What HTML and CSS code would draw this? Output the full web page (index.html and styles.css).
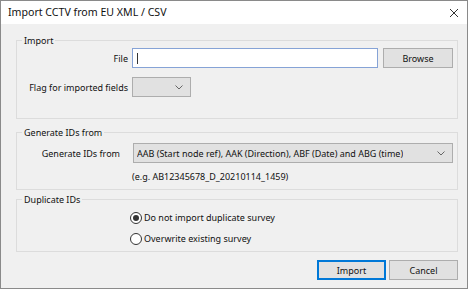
FILE: index.html
```html
<!DOCTYPE html>
<html lang="en">
<head>
    <meta charset="UTF-8">
    <meta name="viewport" content="width=device-width, initial-scale=1.0">
    <title>Import CCTV from EU XML / CSV</title>
    <link rel="stylesheet" href="styles.css">
</head>
<body>
    <div class="window">
        <div class="titlebar">
            <span class="title">Import CCTV from EU XML / CSV</span>
            <svg class="close" width="10" height="10" viewBox="0 0 10 10">
                <path d="M1 1 L9 9 M9 1 L1 9" stroke="#333" stroke-width="1" fill="none"/>
            </svg>
        </div>

        <div class="content">
            <fieldset class="group group-import">
                <legend>Import</legend>
                <div class="row">
                    <label class="label">File</label>
                    <div class="text-input"><span class="caret"></span></div>
                    <div class="btn btn-browse">Browse</div>
                </div>
                <div class="row row-flag">
                    <label class="label">Flag for imported fields</label>
                    <div class="combo combo-flag">
                        <span class="combo-text"></span>
                        <svg class="chevron" width="8" height="5" viewBox="0 0 8 5">
                            <path d="M0.5 0.5 L4 4 L7.5 0.5" stroke="#666" stroke-width="1" fill="none"/>
                        </svg>
                    </div>
                </div>
            </fieldset>

            <fieldset class="group group-ids">
                <legend>Generate IDs from</legend>
                <div class="row">
                    <label class="label">Generate IDs from</label>
                    <div class="combo combo-ids">
                        <span class="combo-text">AAB (Start node ref), AAK (Direction), ABF (Date) and ABG (time)</span>
                        <svg class="chevron" width="8" height="5" viewBox="0 0 8 5">
                            <path d="M0.5 0.5 L4 4 L7.5 0.5" stroke="#666" stroke-width="1" fill="none"/>
                        </svg>
                    </div>
                </div>
                <div class="example">(e.g. AB12345678_D_20210114_1459)</div>
            </fieldset>

            <fieldset class="group group-dup">
                <legend>Duplicate IDs</legend>
                <div class="radio-list">
                    <div class="radio checked"><span class="radio-dot"></span>Do not import duplicate survey</div>
                    <div class="radio"><span class="radio-dot"></span>Overwrite existing survey</div>
                </div>
            </fieldset>

            <div class="footer">
                <div class="btn btn-default">Import</div>
                <div class="btn">Cancel</div>
            </div>
        </div>
    </div>
</body>
</html>
```

FILE: styles.css
```css
body {
    margin: 0;
    padding: 0;
    font-family: "Noto Sans", "Open Sans", sans-serif;
    font-size: 9px;
    color: #111;
    background-color: #f0f0f0;
}

.window {
    width: 468px;
    height: 289px;
    box-sizing: border-box;
    border: 1px solid #8a8a8a;
    background-color: #f0f0f0;
    display: flex;
    flex-direction: column;
}

.titlebar {
    height: 23px;
    background-color: #fff;
    display: flex;
    align-items: center;
    justify-content: space-between;
    padding: 0 8px 0 7px;
}

.title {
    font-size: 10.6px;
    line-height: 15px;
    white-space: nowrap;
}

.close {
    display: block;
}

.content {
    flex: 1;
    display: flex;
    flex-direction: column;
}

.group {
    margin: 0 9px 0 15px;
    padding: 0;
    border: 1px solid #dcdcdc;
    min-width: 0;
}

.group legend {
    margin-left: 5px;
    padding: 0 2px;
    line-height: 15px;
    white-space: nowrap;
}

.group-import {
    margin-top: 9px;
    padding-bottom: 21px;
}

.group-ids {
    margin-top: 6px;
    padding-top: 3px;
    padding-bottom: 5px;
}

.group-dup {
    margin-top: 2px;
    padding: 3px 0 5px 0;
}

.row {
    display: flex;
    align-items: center;
    height: 20px;
}

.row-flag {
    margin-top: 9px;
}

.label {
    text-align: right;
    line-height: 15px;
    white-space: nowrap;
}

.group-import .label {
    width: 111px;
    margin-right: 4px;
}

.group-ids .label {
    width: 103px;
    margin-right: 13px;
}

.text-input {
    width: 246px;
    height: 20px;
    box-sizing: border-box;
    border: 1px solid #86a3d6;
    background-color: #fff;
    display: flex;
    align-items: center;
    padding-left: 4px;
}

.caret {
    width: 1px;
    height: 11px;
    background-color: #333;
}

.btn {
    height: 20px;
    box-sizing: border-box;
    width: 69px;
    border: 1px solid #adadad;
    background-color: #e1e1e1;
    display: flex;
    align-items: center;
    justify-content: center;
    line-height: 15px;
}

.btn-browse {
    width: 70px;
    margin-left: 5px;
}

.btn-default {
    border-color: #0078d7;
    box-shadow: inset 0 0 0 1px #0078d7;
}

.combo {
    height: 20px;
    box-sizing: border-box;
    border: 1px solid #adadad;
    background-color: #e1e1e1;
    display: flex;
    align-items: center;
    justify-content: space-between;
    padding: 0 7px 0 3px;
}

.combo-flag {
    width: 59px;
}

.combo-ids {
    width: 320px;
}

.combo-text {
    line-height: 15px;
    white-space: nowrap;
    overflow: hidden;
}

.chevron {
    display: block;
    flex: none;
}

.example {
    margin: 6px 0 0 115px;
    line-height: 15px;
}

.radio-list {
    padding-left: 113px;
}

.radio {
    display: flex;
    align-items: center;
    line-height: 15px;
}

.radio + .radio {
    margin-top: 6px;
}

.radio-dot {
    width: 12px;
    height: 12px;
    box-sizing: border-box;
    border: 1px solid #333;
    border-radius: 50%;
    background-color: #fff;
    margin-right: 2px;
    display: flex;
    align-items: center;
    justify-content: center;
}

.radio.checked .radio-dot::after {
    content: "";
    width: 6px;
    height: 6px;
    border-radius: 50%;
    background-color: #333;
}

.footer {
    display: flex;
    justify-content: flex-end;
    gap: 3px;
    margin: 8px 9px 0 0;
}
```
